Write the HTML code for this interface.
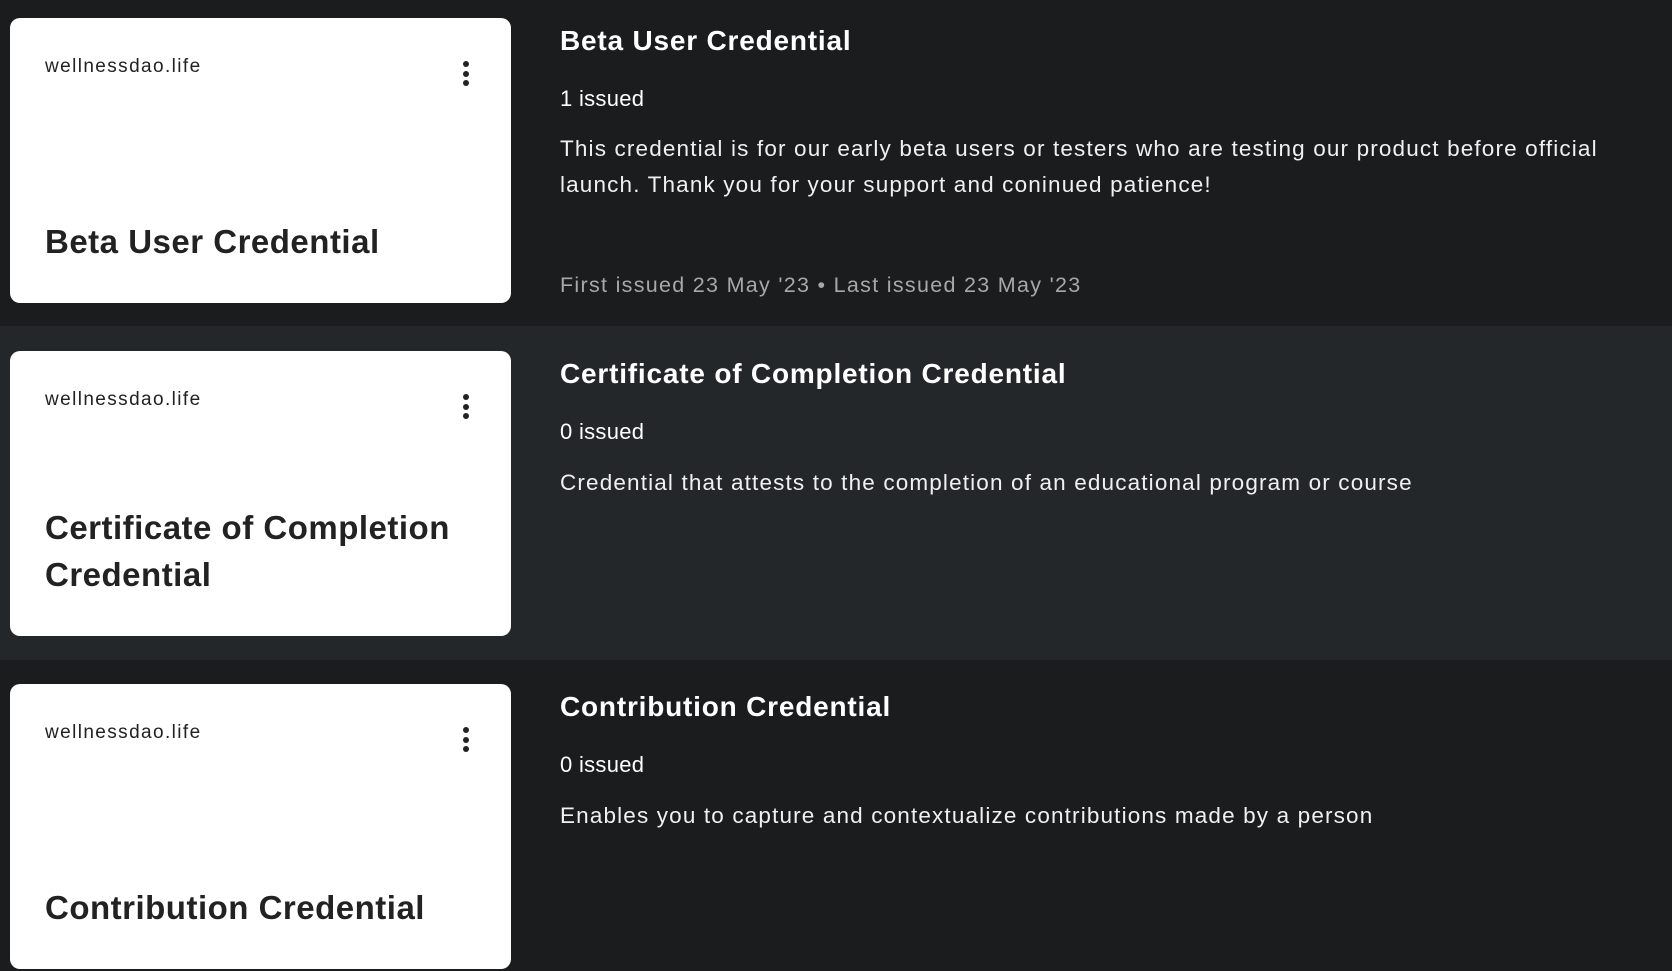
<!DOCTYPE html>
<html><head><meta charset="utf-8"><style>
*{margin:0;padding:0;box-sizing:border-box}
body{width:1672px;height:971px;overflow:hidden;background:#1b1c1e;font-family:"Liberation Sans",sans-serif;position:relative}
.row{position:absolute;left:0;width:1672px}
.card{position:absolute;left:10px;width:501px;height:285px;background:#fff;border-radius:10px}
.dom{position:absolute;left:35px;top:38px;font-size:19px;color:#222;letter-spacing:1.4px}
.dots{position:absolute;left:453px;top:43px;width:6px}
.dots i{display:block;width:6px;height:6px;border-radius:50%;background:#222;margin-bottom:3.5px}
.ct{position:absolute;left:35px;bottom:38px;font-size:33px;font-weight:bold;color:#222;line-height:47px;width:460px;letter-spacing:0.5px}
.t{position:absolute;left:560px;font-size:28px;font-weight:bold;color:#fff;letter-spacing:0.8px}
.iss{position:absolute;left:560px;font-size:22px;color:#fff;letter-spacing:0.3px}
.d{position:absolute;left:560px;font-size:22.5px;color:#f0f0f0;line-height:36px;width:1095px;letter-spacing:1.15px}
.f{position:absolute;left:560px;font-size:21.5px;color:#a8a8a8;letter-spacing:1.3px}
</style></head><body>
<div class="row" style="top:0;height:326px;background:#1b1c1e"></div>
<div class="row" style="top:326px;height:334px;background:#24272a"></div>
<div class="row" style="top:660px;height:311px;background:#1b1c1e"></div>

<div class="card" style="top:18px"><div class="dom">wellnessdao.life</div><div class="dots"><i></i><i></i><i></i></div><div class="ct">Beta User Credential</div></div>
<div class="t" style="top:25px">Beta User Credential</div>
<div class="iss" style="top:86px">1 issued</div>
<div class="d" style="top:131px">This credential is for our early beta users or testers who are testing our product before official launch. Thank you for your support and coninued patience!</div>
<div class="f" style="top:273px">First issued 23 May '23 • Last issued 23 May '23</div>

<div class="card" style="top:351px"><div class="dom">wellnessdao.life</div><div class="dots"><i></i><i></i><i></i></div><div class="ct">Certificate of Completion Credential</div></div>
<div class="t" style="top:358px">Certificate of Completion Credential</div>
<div class="iss" style="top:419px">0 issued</div>
<div class="d" style="top:465px">Credential that attests to the completion of an educational program or course</div>

<div class="card" style="top:684px"><div class="dom">wellnessdao.life</div><div class="dots"><i></i><i></i><i></i></div><div class="ct">Contribution Credential</div></div>
<div class="t" style="top:691px">Contribution Credential</div>
<div class="iss" style="top:752px">0 issued</div>
<div class="d" style="top:798px">Enables you to capture and contextualize contributions made by a person</div>
</body></html>
